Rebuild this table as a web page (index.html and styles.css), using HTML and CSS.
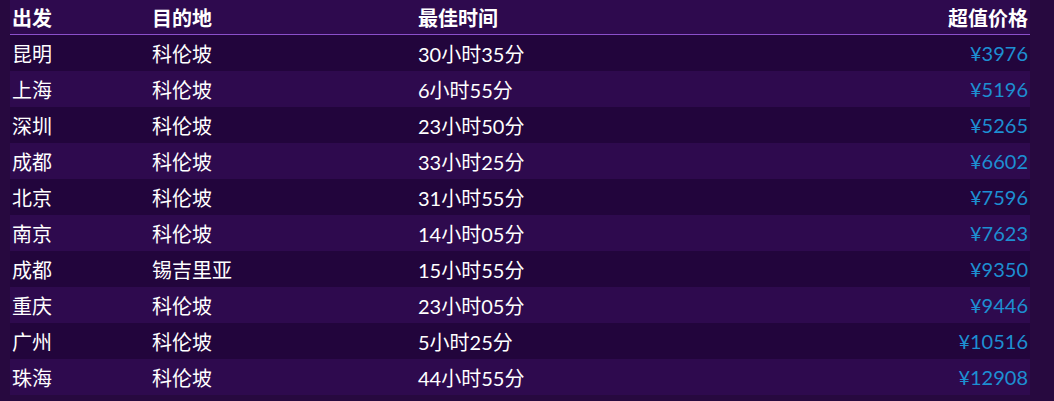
FILE: index.html
```html
<!DOCTYPE html>
<html lang="zh">
<head>
<meta charset="utf-8">
<link rel="stylesheet" href="styles.css">
</head>
<body>
<table class="flights">
  <thead>
    <tr><th class="c1">出发</th><th class="c2">目的地</th><th class="c3">最佳时间</th><th class="c4">超值价格</th></tr>
  </thead>
  <tbody>
    <tr><td>昆明</td><td>科伦坡</td><td>30小时35分</td><td class="price">¥3976</td></tr>
    <tr><td>上海</td><td>科伦坡</td><td>6小时55分</td><td class="price">¥5196</td></tr>
    <tr><td>深圳</td><td>科伦坡</td><td>23小时50分</td><td class="price">¥5265</td></tr>
    <tr><td>成都</td><td>科伦坡</td><td>33小时25分</td><td class="price">¥6602</td></tr>
    <tr><td>北京</td><td>科伦坡</td><td>31小时55分</td><td class="price">¥7596</td></tr>
    <tr><td>南京</td><td>科伦坡</td><td>14小时05分</td><td class="price">¥7623</td></tr>
    <tr><td>成都</td><td>锡吉里亚</td><td>15小时55分</td><td class="price">¥9350</td></tr>
    <tr><td>重庆</td><td>科伦坡</td><td>23小时05分</td><td class="price">¥9446</td></tr>
    <tr><td>广州</td><td>科伦坡</td><td>5小时25分</td><td class="price">¥10516</td></tr>
    <tr><td>珠海</td><td>科伦坡</td><td>44小时55分</td><td class="price">¥12908</td></tr>
  </tbody>
</table>
</body>
</html>
```
FILE: styles.css
```css
html, body {
  margin: 0;
  padding: 0;
  background: #27093f;
}
body {
  padding: 0 24px 0 10px;
  font-family: Lato, "Noto Sans CJK SC", sans-serif;
  color: #ffffff;
}
.flights {
  width: 1020px;
  border-collapse: collapse;
  font-size: 20px;
}
.flights th {
  height: 34px;
  padding: 0 2px;
  font-weight: 700;
  text-align: left;
  background: #2e0a4e;
  border-bottom: 1px solid #8b4fcb;
  font-family: "Noto Sans CJK SC", sans-serif;
}
.flights td {
  height: 36px;
  padding: 0 2px;
}
.flights .c1 { width: 136px; }
.flights .c2 { width: 262px; }
.flights .c4 { text-align: right; }
.flights tbody tr:nth-child(odd) { background: #22053c; }
.flights tbody tr:nth-child(even) { background: #2e0a4e; }
.flights .price {
  text-align: right;
  color: #1d8fd2;
}
```
